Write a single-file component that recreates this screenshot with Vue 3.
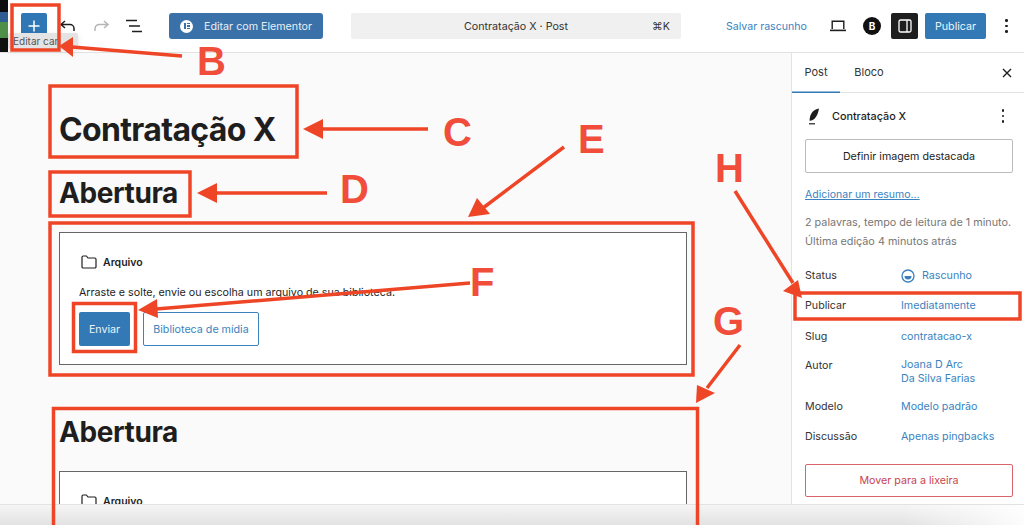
<script setup>
const meta = [
  { label: 'Publicar', value: 'Imediatamente', cls: 'h31' },
  { label: 'Slug', value: 'contratacao-x', cls: 'h29' },
]
const meta2 = [
  { label: 'Modelo', value: 'Modelo padrão', cls: 'h30' },
  { label: 'Discussão', value: 'Apenas pingbacks', cls: 'h30' },
]
const boxes = [
  [12, 5, 47, 45], [50, 86, 247, 71], [50, 172, 140, 44], [50, 223, 643, 152],
  [73.5, 303.5, 62, 48], [53.5, 408.5, 644, 130], [795, 293, 225, 26],
]
const arrows = [
  { d: 'M182 56 L72 47', head: '59,46 73,37 73,57' },
  { d: 'M428 129 L322 129', head: '303,129 323,119 323,139' },
  { d: 'M327 193 L216 193', head: '197,193 217,183 217,203' },
  { d: 'M564 147 L483 208', head: '468,217 477,198 490,214' },
  { d: 'M470 283 L156 309', head: '138,310 157,299 158,318' },
  { d: 'M740 345 L707 388', head: '696,403 697,385 715,393' },
  { d: 'M735 191 L793 283', head: '802,298 783,291 798,280' },
]
const letters = [
  { t: 'B', x: 197, y: 75 }, { t: 'C', x: 443, y: 146 }, { t: 'D', x: 340, y: 203 },
  { t: 'E', x: 578, y: 153 }, { t: 'F', x: 470, y: 296 }, { t: 'G', x: 713, y: 335 }, { t: 'H', x: 715, y: 182 },
]
</script>

<template>
  <div class="page">
    <header class="bar">
      <div class="thumb"></div>
      <button class="add">
        <svg width="14" height="14" viewBox="0 0 14 14"><path d="M7 1.500v11M1.500 7h11" stroke="#fff" stroke-width="1.500"/></svg>
      </button>
      <svg class="ic undo" width="18" height="14" viewBox="0 0 18 14" fill="none"><path d="M6 2 2 5.500 6 9M2 5.500h9a4 4 0 0 1 4 4V12" stroke="#1e1e1e" stroke-width="1.500"/></svg>
      <svg class="ic redo" width="18" height="14" viewBox="0 0 18 14" fill="none"><path d="M12 2l4 3.500L12 9M16 5.500H7a4 4 0 0 0-4 4V12" stroke="#b5b5b5" stroke-width="1.500"/></svg>
      <svg class="ic list" width="18" height="14" viewBox="0 0 18 14" fill="none"><path d="M1 1.500h11M4 7h11M7 12.500h10" stroke="#1e1e1e" stroke-width="1.500"/></svg>
      <button class="elementor">
        <span class="e-logo"><i></i><b></b></span>
        Editar com Elementor
      </button>
      <div class="command">
        <span>Contratação X · Post</span>
        <kbd>⌘K</kbd>
      </div>
      <a class="save">Salvar rascunho</a>
      <svg class="ic laptop" width="18" height="14" viewBox="0 0 18 14" fill="none"><path d="M3.200 10V2.200h11.600V10" stroke="#1e1e1e" stroke-width="1.400"/><path d="M1 11.400h16" stroke="#1e1e1e" stroke-width="1.600"/></svg>
      <span class="badge">B</span>
      <button class="panel">
        <svg width="14" height="14" viewBox="0 0 14 14" fill="none"><rect x="1" y="1" width="12" height="12" rx="1.500" stroke="#fff" stroke-width="1.300"/><path d="M9 1v12" stroke="#fff" stroke-width="1.300"/></svg>
      </button>
      <button class="publish">Publicar</button>
      <span class="dots"><i></i><i></i><i></i></span>
    </header>

    <div class="body">
      <main class="canvas">
        <h1>Contratação X</h1>
        <h2>Abertura</h2>
        <section class="file">
          <div class="file-title">
            <svg width="16" height="14" viewBox="0 0 16 14" fill="none"><path d="M1 12V2.200C1 1.500 1.500 1 2.200 1h3.200l1.600 2h6.800c.7 0 1.200.5 1.200 1.200V12c0 .6-.5 1-1.200 1H2.200C1.500 13 1 12.600 1 12Z" stroke="#1e1e1e" stroke-width="1.200"/></svg>
            <strong>Arquivo</strong>
          </div>
          <p>Arraste e solte, envie ou escolha um arquivo de sua biblioteca.</p>
          <div class="file-actions">
            <button class="primary">Enviar</button>
            <button class="outline">Biblioteca de mídia</button>
          </div>
        </section>
        <h2 class="second">Abertura</h2>
        <section class="file">
          <div class="file-title">
            <svg width="16" height="14" viewBox="0 0 16 14" fill="none"><path d="M1 12V2.200C1 1.500 1.500 1 2.200 1h3.200l1.600 2h6.800c.7 0 1.200.5 1.200 1.200V12c0 .6-.5 1-1.200 1H2.200C1.500 13 1 12.600 1 12Z" stroke="#1e1e1e" stroke-width="1.200"/></svg>
            <strong>Arquivo</strong>
          </div>
        </section>
      </main>

      <aside class="side">
        <div class="tabs">
          <span class="tab active">Post</span>
          <span class="tab">Bloco</span>
          <svg class="close" width="12" height="12" viewBox="0 0 12 12"><path d="M2 2l8 8M10 2l-8 8" stroke="#1e1e1e" stroke-width="1.400"/></svg>
        </div>
        <div class="side-body">
          <div class="post-title">
            <svg class="quill" width="12" height="17" viewBox="0 0 12 17"><path d="M11 .5C5.500 1.500 2 5 1.500 12.500l1 .3C7 12 10 7 11 .5Z" fill="#1e1e1e"/><path d="M1 15.800h6" stroke="#1e1e1e" stroke-width="1.200"/></svg>
            <strong>Contratação X</strong>
            <span class="dots small"><i></i><i></i><i></i></span>
          </div>
          <button class="featured">Definir imagem destacada</button>
          <a class="excerpt">Adicionar um resumo...</a>
          <p class="info">2 palavras, tempo de leitura de 1 minuto.<br>Última edição 4 minutos atrás</p>
          <div class="row h30 first">
            <span>Status</span>
            <a class="status"><svg width="14" height="14" viewBox="0 0 14 14" fill="none"><circle cx="7" cy="7" r="6" stroke="#3a7fbd" stroke-width="1.300"/><path d="M3.500 7h7a3.500 3.500 0 0 1-7 0Z" fill="#3a7fbd"/></svg>Rascunho</a>
          </div>
          <div v-for="m in meta" :key="m.label" class="row" :class="m.cls">
            <span>{{ m.label }}</span><a>{{ m.value }}</a>
          </div>
          <div class="row author">
            <span>Autor</span><a>Joana D Arc<br>Da Silva Farias</a>
          </div>
          <div v-for="m in meta2" :key="m.label" class="row" :class="m.cls">
            <span>{{ m.label }}</span><a>{{ m.value }}</a>
          </div>
          <button class="trash">Mover para a lixeira</button>
        </div>
      </aside>
    </div>

    <div class="tooltip">Editar can</div>
    <div class="foot"></div>

    <svg class="marks" width="1024" height="525" viewBox="0 0 1024 525" fill="none">
      <rect v-for="(b, i) in boxes" :key="i" :x="b[0]" :y="b[1]" :width="b[2]" :height="b[3]" stroke="#ef4527" stroke-width="3.500"/>
      <g v-for="(a, i) in arrows" :key="'a' + i">
        <path :d="a.d" stroke="#ef4527" stroke-width="3.500"/>
        <polygon :points="a.head" fill="#ef4527"/>
      </g>
      <text v-for="l in letters" :key="l.t" :x="l.x" :y="l.y" class="letter">{{ l.t }}</text>
    </svg>
  </div>
</template>

<style>
html, body { margin: 0; background: #fff; }
</style>

<style scoped>
.page { position: relative; width: 1024px; height: 525px; overflow: hidden; font-family: Inter, "Liberation Sans", sans-serif; color: #1e1e1e; font-size: 11px; background: #fff; }
button { font-family: inherit; border: 0; padding: 0; }
.bar { height: 52px; border-bottom: 1px solid #e2e2e2; display: flex; align-items: center; background: #fff; }
.thumb { width: 8px; height: 52px; background: linear-gradient(#0d0d10 0 12px, #2f5d92 12px 22px, #4f8f4a 22px 38px, #111 38px); }
.add { width: 26px; height: 26px; margin-left: 13px; background: #2f78b5; border-radius: 2px; display: flex; align-items: center; justify-content: center; }
.ic { flex: none; }
.undo { margin-left: 12px; }
.redo { margin-left: 15px; }
.list { margin-left: 15px; }
.elementor { margin-left: 26px; width: 154px; height: 26px; background: #3a71a9; color: #e8eef5; border-radius: 3px; display: flex; align-items: center; font-size: 10.700px; padding-left: 11px; gap: 11px; }
.e-logo { width: 13px; height: 13px; border-radius: 50%; background: #fff; position: relative; flex: none; }
.e-logo i { position: absolute; left: 4px; top: 3.500px; width: 1.500px; height: 6px; background: #3a71a9; }
.e-logo b { position: absolute; left: 6.500px; top: 3.500px; width: 3px; height: 6px; background: repeating-linear-gradient(#3a71a9 0 1.200px, #fff 1.200px 2.400px); }
.command { margin-left: 28px; width: 330px; height: 26px; background: #f0f0f0; border-radius: 2px; display: flex; align-items: center; justify-content: center; position: relative; font-size: 10.700px; color: #333; }
.command kbd { position: absolute; right: 11px; font: inherit; }
.save { margin-left: 45px; color: #3a83bf; font-size: 10.600px; width: 81px; white-space: nowrap; }
.laptop { margin-left: 22px; }
.badge { margin-left: 16px; width: 18px; height: 18px; border-radius: 50%; background: #111; color: #fff; font-size: 10px; font-weight: 700; display: flex; align-items: center; justify-content: center; }
.panel { margin-left: 10px; width: 27px; height: 26px; background: #1e1e1e; border-radius: 2px; display: flex; align-items: center; justify-content: center; }
.publish { margin-left: 7px; width: 61px; height: 26px; background: #3279b5; color: #eef4f9; font-size: 10.700px; border-radius: 2px; }
.dots { margin-left: 19px; display: flex; flex-direction: column; gap: 3px; }
.dots i { width: 2.500px; height: 2.500px; border-radius: 50%; background: #1e1e1e; display: block; }
.body { display: flex; height: 472px; }
.canvas { flex: 1; background: #fafafa; padding: 0 103px 0 59px; min-width: 0; }
h1 { margin: 58px 0 0; font-size: 32px; line-height: 38px; font-weight: 700; letter-spacing: -.65px; }
h2 { margin: 27px 0 0; font-size: 28px; line-height: 34px; font-weight: 700; letter-spacing: -.4px; }
h2.second { margin-top: 50px; }
.file { margin-top: 22px; width: 628px; height: 133px; box-sizing: border-box; border: 1px solid #666; background: #fff; padding: 20px 19px; }
.file-title { display: flex; align-items: center; gap: 6px; margin-left: 2px; height: 18px; }
.file-title strong { font-size: 10.500px; font-weight: 600; }
.file p { margin: 14px 0 0; font-size: 10.700px; line-height: 16px; white-space: nowrap; }
.file-actions { display: flex; gap: 13px; margin-top: 11px; }
.primary { width: 51px; height: 34px; background: #3279b5; color: #eef4f9; font-size: 10.700px; border-radius: 2px; }
.outline { width: 116px; height: 34px; box-sizing: border-box; border: 1px solid #3a83bf; background: #fff; color: #3a83bf; font-size: 10.700px; border-radius: 2px; }
.side { width: 233px; flex: none; box-sizing: border-box; border-left: 1px solid #e2e2e2; background: #fff; }
.tabs { height: 39px; border-bottom: 1px solid #e2e2e2; display: flex; align-items: center; position: relative; font-size: 11px; }
.tab { width: 48px; text-align: center; line-height: 39px; color: #333; }
.tab + .tab { margin-left: 5px; }
.tab.active { box-shadow: inset 0 -1.500px 0 #3279b5; height: 40px; }
.close { position: absolute; right: 11px; top: 14px; }
.side-body { padding: 12px 11px 0 13px; }
.post-title { display: flex; align-items: center; height: 18px; margin-top: 2px; gap: 12px; }
.quill { margin-left: 3px; flex: none; }
.post-title strong { font-size: 10.800px; font-weight: 500; flex: 1; }
.dots.small { margin: 0 9px 0 0; }
.featured { display: block; margin-top: 14px; width: 208px; height: 34px; box-sizing: border-box; border: 1px solid #bbb; background: #fff; border-radius: 2px; font-size: 10.700px; color: #222; }
.excerpt { display: block; margin-top: 14px; font-size: 10.500px; line-height: 16px; color: #3a83bf; text-decoration: underline; }
.info { margin: 10px 0 0; font-size: 10.800px; line-height: 19px; color: #777; white-space: nowrap; }
.row { display: flex; font-size: 10.700px; line-height: 14px; align-items: flex-start; }
.row > span { width: 96px; flex: none; color: #333; }
.row a { color: #3a83bf; }
.row.first { margin-top: 18px; }
.h29 { height: 29px; }
.h30 { height: 30px; }
.h31 { height: 31px; }
.author { height: 41px; }
.author a { margin-top: -1px; }
.status { display: flex; align-items: center; gap: 7px; }
.trash { display: block; margin-top: 4px; width: 208px; height: 33px; box-sizing: border-box; border: 1px solid #d9646b; background: #fff; color: #c9444f; font-size: 10.700px; border-radius: 2px; }
.tooltip { position: absolute; left: 8px; top: 33px; width: 70px; height: 16px; background: #e4e4e4; border-radius: 2px; font-size: 10px; line-height: 16px; padding-left: 5px; box-sizing: border-box; color: #555; box-shadow: 0 2px 6px rgba(0,0,0,.1); white-space: nowrap; }
.foot { position: absolute; left: 0; right: 0; bottom: 0; height: 21px; box-sizing: border-box; background: linear-gradient(90deg, rgba(255,255,255,0) 88%, rgba(255,255,255,.9) 100%), linear-gradient(#f5f5f5, #e2e2e2); border-top: 1px solid #e2e2e2; }
.marks { position: absolute; left: 0; top: 0; }
.letter { font-family: "Liberation Sans", sans-serif; font-weight: 700; font-size: 40px; fill: #f04e3a; }
</style>
